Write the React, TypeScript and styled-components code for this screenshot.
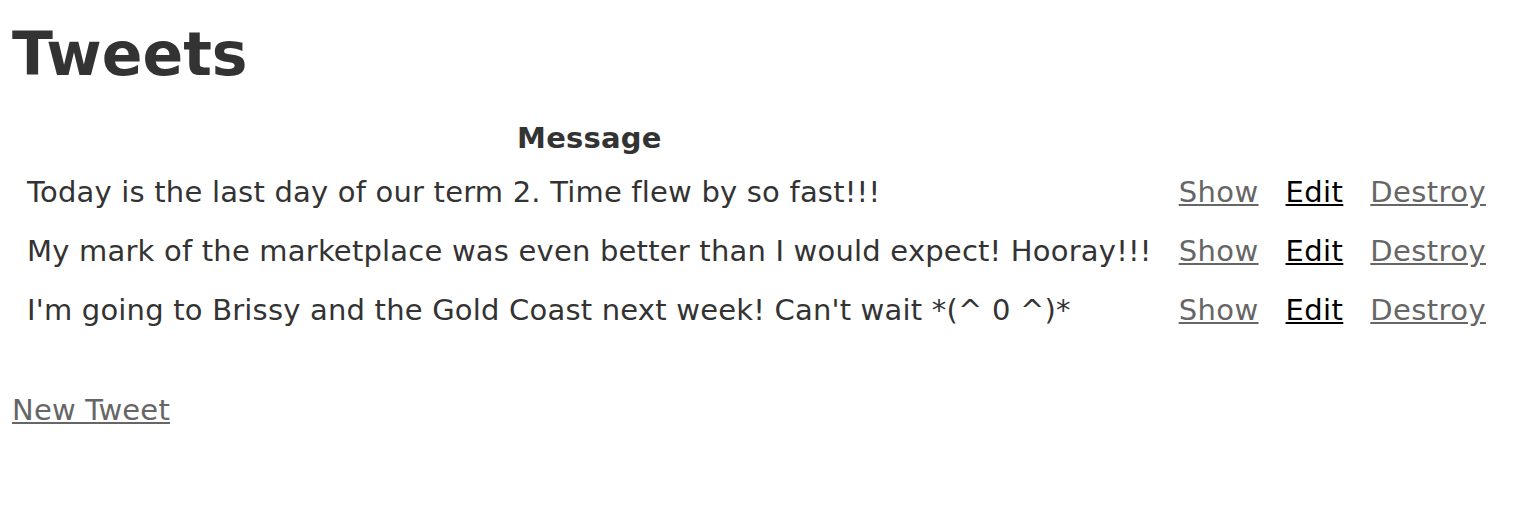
import React from "react";
import styled, { createGlobalStyle } from "styled-components";

const Global = createGlobalStyle`
  html, body { margin: 0; padding: 0; background: #fff; }
  body {
    color: #333;
    font-family: "DejaVu Sans", Verdana, sans-serif;
    font-size: 29px;
  }
`;

const Page = styled.div`
  padding: 0 12px;
`;

const Title = styled.h1`
  margin: 0;
  padding-top: 18px;
  font-size: 60px;
  line-height: 72px;
  font-weight: bold;
  color: #333;
`;

const Table = styled.table`
  margin-top: 22px;
  border-spacing: 2px;
  border-collapse: separate;
  letter-spacing: 0.2px;
`;

const Th = styled.th`
  font-weight: bold;
  padding: 4px 13px;
  line-height: 40px;
  text-align: center;
`;

const Td = styled.td`
  padding: 8px 13px;
  line-height: 41px;
  white-space: nowrap;
`;

const LinkCell = styled(Td)`
  padding: 8px 13px 8px 12px;
  letter-spacing: 0.4px;
`;

const Link = styled.a<{ $visited?: boolean }>`
  color: ${(p) => (p.$visited ? "#666" : "#000")};
  text-decoration: underline;
`;

const Footer = styled.div`
  margin-top: 52px;
  letter-spacing: 0.2px;
`;

const tweets = [
  "Today is the last day of our term 2. Time flew by so fast!!!",
  "My mark of the marketplace was even better than I would expect! Hooray!!!",
  "I'm going to Brissy and the Gold Coast next week! Can't wait *(^ 0 ^)*",
];

export default function App() {
  return (
    <>
      <Global />
      <Page>
        <Title>Tweets</Title>
        <Table>
          <thead>
            <tr>
              <Th>Message</Th>
              <Th />
              <Th />
              <Th />
            </tr>
          </thead>
          <tbody>
            {tweets.map((t) => (
              <tr key={t}>
                <Td>{t}</Td>
                <LinkCell><Link href="#" $visited>Show</Link></LinkCell>
                <LinkCell><Link href="#">Edit</Link></LinkCell>
                <LinkCell><Link href="#" $visited>Destroy</Link></LinkCell>
              </tr>
            ))}
          </tbody>
        </Table>
        <Footer>
          <Link href="#" $visited>New Tweet</Link>
        </Footer>
      </Page>
    </>
  );
}
